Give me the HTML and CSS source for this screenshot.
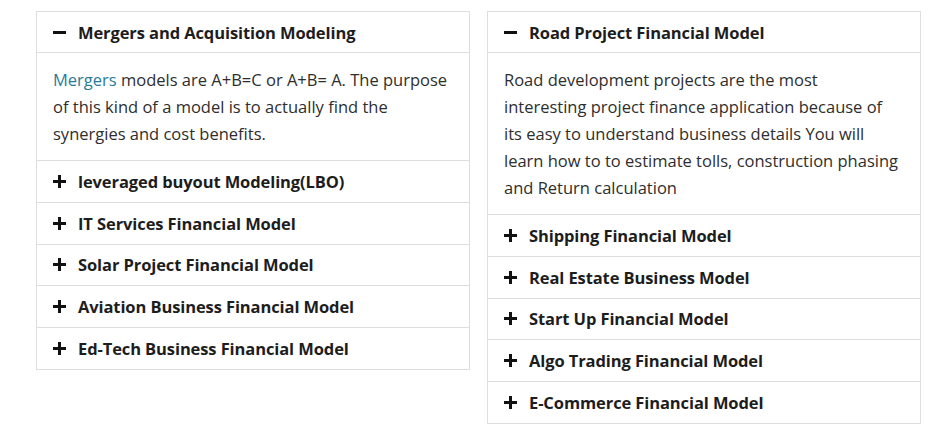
FILE: index.html
```html
<!DOCTYPE html>
<html>
<head>
<meta charset="utf-8">
<link rel="stylesheet" href="styles.css">
</head>
<body>
<div class="wrap">
  <div class="panel">
    <div class="item open">
      <div class="head"><span class="ico minus"></span><span class="title">Mergers and Acquisition Modeling</span></div>
      <div class="body"><a class="link">Mergers</a> models are A+B=C or A+B= A. The purpose of this kind of a model is to actually find the synergies and cost benefits.</div>
    </div>
    <div class="item"><div class="head"><span class="ico plus"></span><span class="title">leveraged buyout Modeling(LBO)</span></div></div>
    <div class="item"><div class="head"><span class="ico plus"></span><span class="title">IT Services Financial Model</span></div></div>
    <div class="item"><div class="head"><span class="ico plus"></span><span class="title">Solar Project Financial Model</span></div></div>
    <div class="item"><div class="head"><span class="ico plus"></span><span class="title">Aviation Business Financial Model</span></div></div>
    <div class="item"><div class="head"><span class="ico plus"></span><span class="title">Ed-Tech Business Financial Model</span></div></div>
  </div>
  <div class="panel">
    <div class="item open">
      <div class="head"><span class="ico minus"></span><span class="title">Road Project Financial Model</span></div>
      <div class="body">Road development projects are the most interesting project finance application because of its easy to understand business details You will learn how to to estimate tolls, construction phasing and Return calculation</div>
    </div>
    <div class="item"><div class="head"><span class="ico plus"></span><span class="title">Shipping Financial Model</span></div></div>
    <div class="item"><div class="head"><span class="ico plus"></span><span class="title">Real Estate Business Model</span></div></div>
    <div class="item"><div class="head"><span class="ico plus"></span><span class="title">Start Up Financial Model</span></div></div>
    <div class="item"><div class="head"><span class="ico plus"></span><span class="title">Algo Trading Financial Model</span></div></div>
    <div class="item"><div class="head"><span class="ico plus"></span><span class="title">E-Commerce Financial Model</span></div></div>
  </div>
</div>
</body>
</html>
```
FILE: styles.css
```css
html, body {
  margin: 0;
  padding: 0;
  background: #fff;
}
body {
  font-family: "Open Sans", "Liberation Sans", sans-serif;
  color: #222;
}
.wrap {
  display: flex;
  align-items: flex-start;
  gap: 17px;
  padding: 11px 0 0 36px;
}
.panel {
  width: 432px;
  border: 1px solid #dedede;
  border-bottom: none;
}
.item {
  border-bottom: 1px solid #dedede;
}
.head {
  height: 40.8px;
  display: flex;
  align-items: center;
  padding-left: 16px;
  box-sizing: border-box;
}
.open .head {
  border-bottom: 1px solid #dedede;
  height: 41px;
}
.title {
  font-size: 16.5px;
  font-weight: 700;
  color: #1d1d1d;
  letter-spacing: -0.1px;
}
.ico {
  width: 13px;
  height: 13px;
  margin-right: 12px;
  position: relative;
  flex: none;
}
.ico::before,
.ico::after {
  content: "";
  position: absolute;
  background: #111;
}
.ico::before {
  left: 0;
  top: 5px;
  width: 13px;
  height: 3px;
}
.plus::after {
  left: 5px;
  top: 0;
  width: 3px;
  height: 13px;
}
.minus::after {
  display: none;
}
.body {
  padding: 13px 16px 13px 16px;
  font-size: 16.5px;
  line-height: 27px;
  color: #2e2e2e;
}
.link {
  color: #2a7b98;
  text-decoration: none;
}
```
